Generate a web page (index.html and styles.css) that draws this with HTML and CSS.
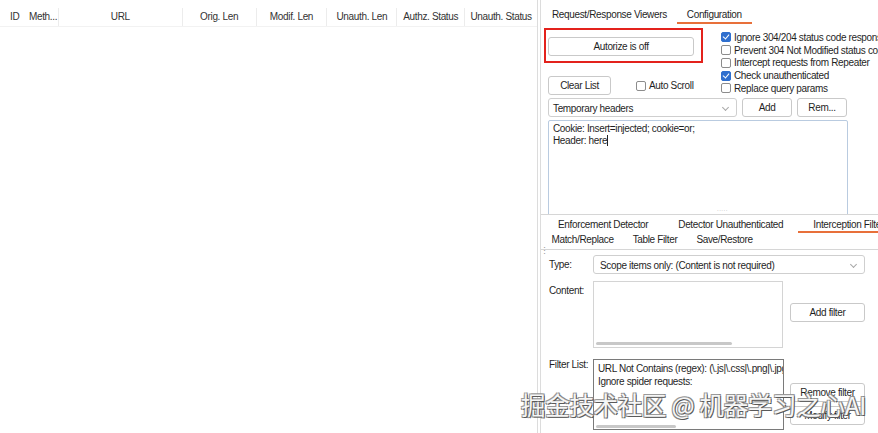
FILE: index.html
```html
<!DOCTYPE html>
<html lang="en">
<head>
  <meta charset="UTF-8">
  <title>Autorize</title>
  <link rel="stylesheet" href="styles.css">
</head>
<body>
  <div class="app">
    <!-- tabla de resultados -->
    <div class="results">
      <div class="thead">
        <div class="th c-id">ID</div>
        <div class="th c-meth">Meth...</div>
        <div class="th c-url">URL</div>
        <div class="th c-orig">Orig. Len</div>
        <div class="th c-mod">Modif. Len</div>
        <div class="th c-ulen">Unauth. Len</div>
        <div class="th c-authz">Authz. Status</div>
        <div class="th c-ustat">Unauth. Status</div>
      </div>
    </div>

    <div class="splitter"></div>

    <!-- panel derecho -->
    <div class="side">
      <div class="top">
        <div class="tabs">
          <span class="tab">Request/Response Viewers</span>
          <span class="tab on">Configuration</span>
        </div>

        <div class="config">
          <div class="config-left">
            <div class="toggle-box">
              <button class="btn toggle">Autorize is off</button>
            </div>
            <div class="clear-row">
              <button class="btn clear">Clear List</button>
              <label class="chk"><i class="box"></i>Auto Scroll</label>
            </div>
          </div>
          <div class="options">
            <label class="chk"><i class="box checked"></i>Ignore 304/204 status code responses</label>
            <label class="chk"><i class="box"></i>Prevent 304 Not Modified status code</label>
            <label class="chk"><i class="box"></i>Intercept requests from Repeater</label>
            <label class="chk"><i class="box checked"></i>Check unauthenticated</label>
            <label class="chk"><i class="box"></i>Replace query params</label>
          </div>
        </div>

        <div class="headers-row">
          <div class="select headers-select">Temporary headers<span class="chev"></span></div>
          <button class="btn small">Add</button>
          <button class="btn small">Rem...</button>
        </div>

        <div class="headers-text">
          Cookie: Insert=injected; cookie=or;<br>
          Header: here<span class="caret"></span>
        </div>
      </div>

      <div class="hsplit"><span class="grip">.....</span></div>

      <div class="bottom">
        <div class="tabs2 row1">
          <span class="tab2">Enforcement Detector</span>
          <span class="tab2">Detector Unauthenticated</span>
          <span class="tab2 on">Interception Filters</span>
        </div>
        <div class="tabs2 row2">
          <span class="tab3">Match/Replace</span>
          <span class="tab3">Table Filter</span>
          <span class="tab3">Save/Restore</span>
        </div>

        <div class="form">
          <span class="vgrip">⋮</span>
          <div class="frow type-row">
            <span class="lbl">Type:</span>
            <div class="select type-select">Scope items only: (Content is not required)<span class="chev"></span></div>
          </div>
          <div class="frow content-row">
            <span class="lbl content-lbl">Content:</span>
            <div class="area content-area"><span class="hbar bar1"></span></div>
            <button class="btn filter-btn add-filter">Add filter</button>
          </div>
          <div class="frow list-row">
            <span class="lbl list-lbl">Filter List:</span>
            <div class="area list-area">
              URL Not Contains (regex): (\.js|\.css|\.png|\.jpg|\.gif)<br>
              Ignore spider requests:
              <span class="hbar bar2"></span>
            </div>
            <div class="list-btns">
              <button class="btn filter-btn">Remove filter</button>
              <button class="btn filter-btn">Modify filter</button>
            </div>
          </div>
        </div>
      </div>
    </div>
  </div>

  <div class="watermark">掘金技术社区 @ 机器学习之心AI</div>
</body>
</html>
```

FILE: styles.css
```css
body {
  margin: 0;
  width: 878px;
  height: 433px;
  overflow: hidden;
  background: #fff;
  font-family: "Liberation Sans", Arial, sans-serif;
  font-size: 10px;
  letter-spacing: -0.35px;
  color: #1f1f1f;
  position: relative;
}
.app {
  display: flex;
  height: 433px;
}

/* tabla */
.results {
  width: 537px;
  flex: none;
  border-right: 1px solid #dcdcdc;
}
.thead {
  display: flex;
  margin-top: 8px;
  height: 18px;
  border-bottom: 1px solid #f2f2f2;
}
.th {
  line-height: 18px;
  text-align: center;
  color: #333;
  border-right: 1px solid #ececec;
  white-space: nowrap;
  overflow: hidden;
}
.c-id { width: 16px; padding-left: 10px; text-align: left; border-right: none; }
.c-meth { width: 29px; text-align: left; padding-left: 3px; }
.c-url { width: 123px; }
.c-orig { width: 73px; }
.c-mod { width: 70px; }
.c-ulen { width: 69px; }
.c-authz { width: 67px; }
.c-ustat { width: 72px; border-right: none; }

.splitter {
  width: 2px;
  flex: none;
}

/* panel derecho */
.side {
  flex: 1;
  min-width: 0;
  border-left: 1px solid #dcdcdc;
  display: flex;
  flex-direction: column;
  overflow: hidden;
}
.top {
  height: 214px;
  flex: none;
  overflow: hidden;
}
.tabs {
  display: flex;
  padding: 8px 0 0 1px;
}
.tab {
  padding: 0 10px;
  line-height: 14px;
  border-bottom: 2px solid transparent;
  white-space: nowrap;
}
.tab.on {
  border-bottom-color: #e8703a;
}

.btn {
  font-family: inherit;
  font-size: 10px;
  letter-spacing: -0.35px;
  color: #1f1f1f;
  background: #fff;
  border: 1px solid #c9c9c9;
  border-radius: 3px;
  padding: 0;
  height: 19px;
}

.config {
  display: flex;
  margin-top: 4px;
}
.config-left {
  flex: none;
  padding-left: 3px;
  width: 177px;
}
.toggle-box {
  width: 153px;
  border: 2px solid #e3221c;
  padding: 7px 0 0 2px;
  height: 24px;
}
.toggle {
  width: 146px;
}
.clear-row {
  display: flex;
  align-items: center;
  margin-top: 13px;
  padding-left: 4px;
}
.clear {
  width: 63px;
}
.clear-row .chk {
  margin-left: 25px;
}

.chk {
  display: flex;
  align-items: center;
  white-space: nowrap;
}
.box {
  display: inline-block;
  flex: none;
  width: 8px;
  height: 8px;
  border: 1px solid #8c8c8c;
  border-radius: 2px;
  margin-right: 3px;
  background: #fff;
  position: relative;
}
.box.checked {
  background: #2f6fce;
  border-color: #2f6fce;
}
.box.checked::after {
  content: "";
  position: absolute;
  left: 2px;
  top: 0px;
  width: 3px;
  height: 5px;
  border: solid #fff;
  border-width: 0 1.5px 1.5px 0;
  transform: rotate(40deg);
}

.options {
  padding-top: 3px;
  min-width: 0;
}
.options .chk {
  height: 12.75px;
}

.headers-row {
  display: flex;
  gap: 5px;
  margin: 3px 0 0 7px;
}
.select {
  position: relative;
  height: 19px;
  line-height: 19px;
  padding-left: 4px;
  border: 1px solid #cfcfcf;
  border-radius: 3px;
  box-sizing: border-box;
  white-space: nowrap;
  flex: none;
}
.chev {
  position: absolute;
  right: 8px;
  top: 6px;
  width: 4px;
  height: 4px;
  border: solid #a8a8a8;
  border-width: 0 1px 1px 0;
  transform: rotate(45deg);
}
.headers-select {
  width: 189px;
}
.small {
  width: 50px;
}

.headers-text {
  margin: 3px 0 0 7px;
  width: 290px;
  height: 100px;
  border: 1px solid #b9cbe0;
  border-radius: 2px;
  padding: 2px 4px;
  line-height: 12px;
}
.caret {
  display: inline-block;
  width: 1px;
  height: 11px;
  background: #222;
  vertical-align: -2px;
}

.hsplit {
  height: 1px;
  border-top: 1px solid #d6d6d6;
  position: relative;
}
.grip {
  position: absolute;
  left: 176px;
  top: -9px;
  font-size: 6px;
  color: #aaa;
  letter-spacing: 0.5px;
}

.bottom {
  flex: 1;
}
.tabs2 {
  display: flex;
  white-space: nowrap;
}
.row1 {
  padding-left: 2px;
}
.tab2 {
  padding: 2px 15px 0;
  line-height: 13px;
  border-bottom: 2px solid transparent;
}
.tab2.on {
  border-bottom-color: #e8703a;
}
.row2 {
  padding-left: 1px;
  border-bottom: 1px solid #d6d6d6;
  padding-bottom: 2px;
}
.tab3 {
  padding: 0 9.5px;
  line-height: 14px;
}

.form {
  position: relative;
  padding: 5px 0 0 8px;
}
.vgrip {
  position: absolute;
  left: -1px;
  top: -4px;
  color: #999;
  font-size: 9px;
}
.frow {
  display: flex;
}
.lbl {
  width: 44px;
  flex: none;
}
.type-row .lbl {
  line-height: 19px;
}
.type-select {
  width: 272px;
  padding-left: 6px;
}
.content-row {
  margin-top: 7px;
}
.content-lbl {
  padding-top: 4px;
}
.area {
  position: relative;
  box-sizing: border-box;
  flex: none;
}
.content-area {
  width: 190px;
  height: 67px;
  border: 1px solid #d4d4d4;
}
.hbar {
  position: absolute;
  bottom: 2px;
  left: 2px;
  height: 3px;
  background: #c8c8c8;
  border-radius: 2px;
}
.bar1 { width: 136px; }
.bar2 { width: 80px; bottom: 1px; }
.filter-btn {
  width: 75px;
  height: 19px;
}
.add-filter {
  margin: 22px 0 0 7px;
}
.list-row {
  margin-top: 11px;
}
.list-lbl {
  padding-top: 0;
}
.list-area {
  width: 191px;
  height: 71px;
  border: 1px solid #7a7a7a;
  padding: 2px 4px;
  line-height: 13px;
  white-space: nowrap;
  overflow: hidden;
}
.list-btns {
  display: flex;
  flex-direction: column;
  gap: 4px;
  margin: 24px 0 0 6px;
}

/* marca de agua */
.watermark {
  position: absolute;
  left: 521px;
  top: 390px;
  font-family: "Noto Sans CJK SC", "Liberation Sans", sans-serif;
  font-size: 24.5px;
  line-height: 30px;
  letter-spacing: -0.3px;
  color: #f6f6f6;
  white-space: nowrap;
  text-shadow: 1px 1px 0 #5a5a5a, -1px -1px 0 #9a9a9a, 1px -1px 0 #8a8a8a, -1px 1px 0 #8a8a8a;
}
```
